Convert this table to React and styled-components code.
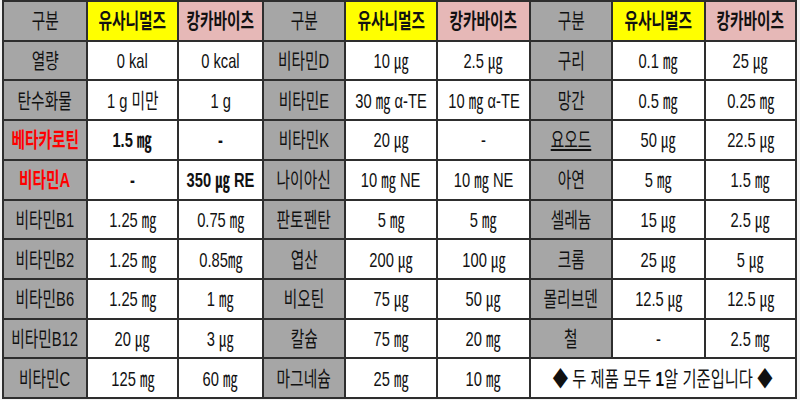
import React from "react";
import styled, { createGlobalStyle } from "styled-components";

const GlobalStyle = createGlobalStyle`
  html, body {
    margin: 0;
    padding: 0;
    background: #f3f3f3;
  }
  body {
    font-family: "Liberation Sans", "Noto Sans CJK KR", sans-serif;
    color: #111;
  }
`;

const COLS = [82, 89, 83, 80, 90, 91, 80, 91, 89];

const header = ["구분", "유사니멀즈", "캉카바이츠"];

// each row: three groups of [label, 유사니멀즈, 캉카바이츠]
const rows = [
  [["열량", "0 kal", "0 kcal"], ["비타민D", "10 ㎍", "2.5 ㎍"], ["구리", "0.1 ㎎", "25 ㎍"]],
  [["탄수화물", "1 g 미만", "1 g"], ["비타민E", "30 ㎎ α-TE", "10 ㎎ α-TE"], ["망간", "0.5 ㎎", "0.25 ㎎"]],
  [["베타카로틴", "1.5 ㎎", "-", true], ["비타민K", "20 ㎍", "-"], ["요오드", "50 ㎍", "22.5 ㎍", false, true]],
  [["비타민A", "-", "350 ㎍ RE", true], ["나이아신", "10 ㎎ NE", "10 ㎎ NE"], ["아연", "5 ㎎", "1.5 ㎎"]],
  [["비타민B1", "1.25 ㎎", "0.75 ㎎"], ["판토펜탄", "5 ㎎", "5 ㎎"], ["셀레늄", "15 ㎍", "2.5 ㎍"]],
  [["비타민B2", "1.25 ㎎", "0.85㎎"], ["엽산", "200 ㎍", "100 ㎍"], ["크롬", "25 ㎍", "5 ㎍"]],
  [["비타민B6", "1.25 ㎎", "1 ㎎"], ["비오틴", "75 ㎍", "50 ㎍"], ["몰리브덴", "12.5 ㎍", "12.5 ㎍"]],
  [["비타민B12", "20 ㎍", "3 ㎍"], ["칼슘", "75 ㎎", "20 ㎎"], ["철", "-", "2.5 ㎎"]],
  [["비타민C", "125 ㎎", "60 ㎎"], ["마그네슘", "25 ㎎", "10 ㎎"]],
];

const Sheet = styled.div`
  display: grid;
  grid-template-columns: ${COLS.map((w) => w + "px").join(" ")};
  grid-template-rows: repeat(10, 1fr);
  gap: 2px;
  padding: 2px;
  margin: 0 0 0 2px;
  width: fit-content;
  height: 395px;
  background: #2e2e2e;
`;

const bgs = {
  label: "#a6a6a6",
  yellow: "#ffff00",
  pink: "#e6b8b7",
  value: "#ffffff",
};

const Cell = styled.div`
  display: flex;
  align-items: center;
  justify-content: center;
  overflow: hidden;
  white-space: nowrap;
  background: ${(p) => bgs[p.kind]};
  grid-column: ${(p) => (p.span ? `span ${p.span}` : "auto")};
`;

const Text = styled.span`
  display: inline-block;
  font-size: 21px;
  line-height: 1;
  transform: scaleX(0.7);
  font-weight: ${(p) => (p.bold ? 700 : 400)};
  color: ${(p) => (p.red ? "#ff0000" : "#111")};
  text-decoration: ${(p) => (p.underline ? "underline" : "none")};
  text-underline-offset: 2px;
`;

const Note = styled(Text)`
  transform: scaleX(0.73);
  font-size: 21px;

  b {
    font-weight: 700;
  }
`;

const App = () => {
  return (
    <>
      <GlobalStyle />
      <Sheet>
        {[0, 1, 2].map((g) =>
          header.map((h, i) => (
            <Cell key={`h${g}${i}`} kind={i === 0 ? "label" : i === 1 ? "yellow" : "pink"}>
              <Text bold={i > 0}>{h}</Text>
            </Cell>
          ))
        )}
        {rows.map((row, r) => (
          <React.Fragment key={r}>
            {row.map(([label, a, b, strong, underline], g) => (
              <React.Fragment key={g}>
                <Cell kind="label">
                  <Text bold={strong} red={strong} underline={underline}>
                    {label}
                  </Text>
                </Cell>
                <Cell kind="value">
                  <Text bold={strong}>{a}</Text>
                </Cell>
                <Cell kind="value">
                  <Text bold={strong}>{b}</Text>
                </Cell>
              </React.Fragment>
            ))}
            {row.length === 2 && (
              <Cell kind="value" span={3}>
                <Note>
                  ◆ 두 제품 모두 <b>1</b>알 기준입니다 ◆
                </Note>
              </Cell>
            )}
          </React.Fragment>
        ))}
      </Sheet>
    </>
  );
};

export default App;
